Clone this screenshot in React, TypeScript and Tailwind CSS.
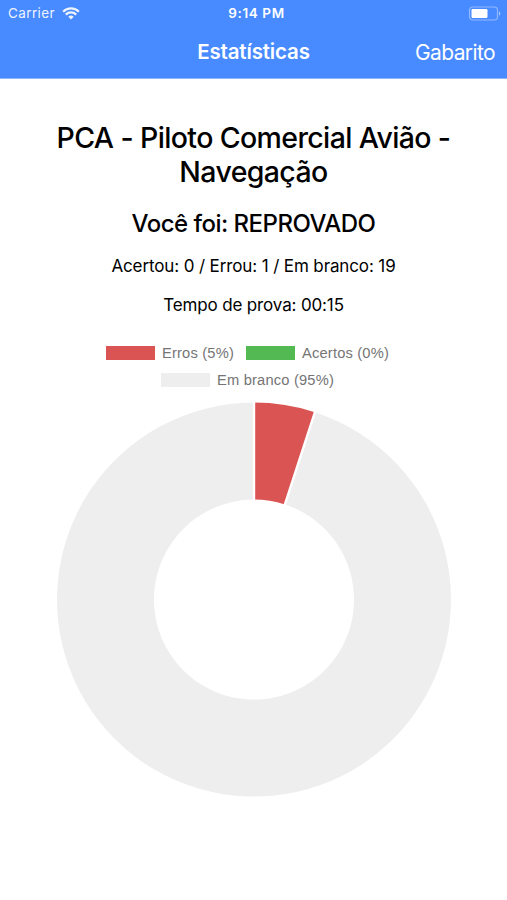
import React from "react";

const CX = 254;
const CY = 197.6;
const OUTER = 197;
const INNER = 100;

function point(radius: number, share: number) {
  const angle = share * Math.PI * 2;
  return `${CX + radius * Math.sin(angle)} ${CY - radius * Math.cos(angle)}`;
}

function slice(from: number, to: number) {
  const large = to - from > 0.5 ? 1 : 0;
  return `M${point(OUTER, from)} A${OUTER} ${OUTER} 0 ${large} 1 ${point(OUTER, to)} L${point(INNER, to)} A${INNER} ${INNER} 0 ${large} 0 ${point(INNER, from)}Z`;
}

function StatusBar() {
  return (
    <div className="grid h-[27px] grid-cols-3 items-center pl-2 pr-[6px] text-[13.5px] leading-none">
      <div className="flex items-center gap-[7px] opacity-90">
        <span className="tracking-[0.38px]">Carrier</span>
        <svg width="18" height="13" viewBox="0 0 18 13" fill="none" stroke="white" strokeWidth="2.2">
          <path d="M1.1 4.7a11.2 11.2 0 0 1 15.8 0" />
          <path d="M3.8 7.6a7.35 7.35 0 0 1 10.4 0" />
          <path d="M9 12.5 6.3 9.8a3.9 3.9 0 0 1 5.4 0Z" fill="white" stroke="none" />
        </svg>
      </div>
      <span className="pl-[4px] text-center font-semibold tracking-[0.6px]">9:14 PM</span>
      <svg className="justify-self-end" width="33" height="15" viewBox="0 0 33 15">
        <rect x="1.5" y="1" width="28" height="13" rx="3.2" fill="none" stroke="white" strokeOpacity=".4" strokeWidth="1.2" />
        <rect x="3.5" y="3" width="16" height="9" rx="1.2" fill="white" />
        <path d="M31 5.2c1.8.8 1.8 3.8 0 4.6Z" fill="white" fillOpacity=".5" />
      </svg>
    </div>
  );
}

function LegendItem({ color, label }: { color: string; label: string }) {
  return (
    <div className="flex items-center gap-[7px]">
      <span className={`h-[14px] w-[49px] ${color}`} />
      <span className="whitespace-nowrap">{label}</span>
    </div>
  );
}

export default function App() {
  return (
    <div className="flex h-[900px] w-[507px] flex-col overflow-hidden bg-white font-['Inter',sans-serif] text-black">
      <header className="h-[79px] border-b border-[#8db5fb] bg-[#488aff] text-white">
        <StatusBar />
        <div className="grid h-[51px] grid-cols-[1fr_auto_1fr] items-center px-3">
          <span />
          <h1 className="text-[20.5px] font-semibold tracking-[-0.15px]">Estatísticas</h1>
          <span className="justify-self-end whitespace-nowrap text-[21px] tracking-[-0.6px]">Gabarito</span>
        </div>
      </header>
      <main className="flex flex-col items-center text-center">
        <h2 className="mt-[42px] whitespace-nowrap text-[28.5px] font-medium leading-[34px] tracking-[-0.62px]">
          PCA - Piloto Comercial Avião -<br />Navegação
        </h2>
        <h3 className="mt-5 whitespace-nowrap text-[24px] font-medium leading-[30px] tracking-[-0.52px]">Você foi: REPROVADO</h3>
        <p className="mt-4 whitespace-nowrap text-[17px] leading-[22px] tracking-[-0.12px]">Acertou: 0 / Errou: 1 / Em branco: 19</p>
        <p className="mt-[17px] whitespace-nowrap text-[17px] leading-[22px] tracking-[-0.14px]">Tempo de prova: 00:15</p>
        <div className="mt-[30px] flex w-full flex-col items-center gap-[13px] pr-[12px] font-['Liberation_Sans',sans-serif] text-[14.7px] leading-[14px] tracking-[0.18px] text-[#757575]">
          <div className="flex gap-3">
            <LegendItem color="bg-[#db5454]" label="Erros (5%)" />
            <LegendItem color="bg-[#53b953]" label="Acertos (0%)" />
          </div>
          <LegendItem color="bg-[#eeeeee]" label="Em branco (95%)" />
        </div>
        <svg className="mt-[15px]" width="507" height="400" viewBox="0 0 507 400">
          <path d={slice(0.05, 1)} fill="#eeeeee" />
          <path d={slice(0, 0.05)} fill="#db5454" />
          <path d={`M${point(INNER - 1, 0)}L${point(OUTER + 1, 0)}M${point(INNER - 1, 0.05)}L${point(OUTER + 1, 0.05)}`} stroke="white" strokeWidth="2.4" />
        </svg>
      </main>
    </div>
  );
}
